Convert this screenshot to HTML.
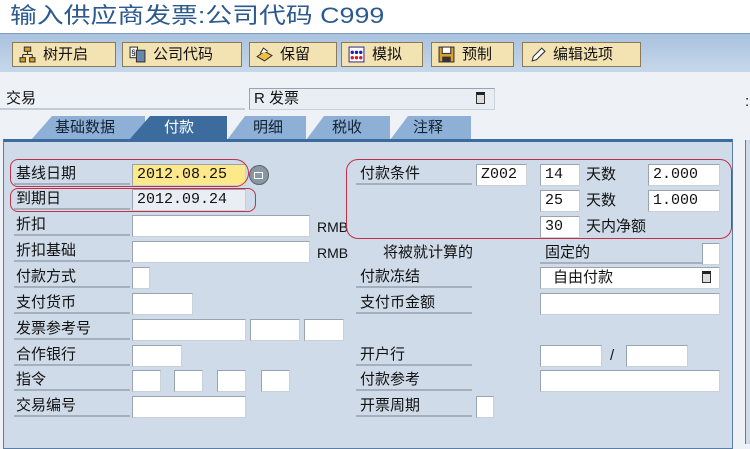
<!DOCTYPE html>
<html><head><meta charset="utf-8"><style>
*{margin:0;padding:0;box-sizing:border-box}
body{width:750px;height:444px;overflow:hidden;background:#eef2f7;font-family:"Liberation Sans","Noto Sans CJK SC",sans-serif;font-size:15px;color:#111;position:relative}
.a{position:absolute}
.t{position:absolute;white-space:nowrap;line-height:20px}
.lb{position:absolute;left:14px;width:116px;height:22px;border-bottom:2px solid #a6b0bc;padding-left:2px;line-height:21px;white-space:nowrap}
.rl{position:absolute;left:356px;width:116px;height:22px;border-bottom:2px solid #a6b0bc;padding-left:4px;line-height:21px;white-space:nowrap}
.in{position:absolute;background:#fff;border:1px solid #9aa4b0;border-right-color:#c8d0d8;border-bottom-color:#c8d0d8;height:22px;font-family:"Liberation Mono",monospace;font-size:15px;line-height:20px;padding-left:4px}
.btn{position:absolute;top:42px;height:25px;background:#f4e3b2;border:1px solid #8a7a5a;line-height:23px;padding-left:30px;font-size:15px;white-space:nowrap}
.ic{position:absolute;left:6px;top:3px;width:17px;height:17px}
.tab{position:absolute;top:116px;height:24px;line-height:24px;font-size:15px;text-align:center;color:#123}
.red{position:absolute;border:1.5px solid #c0304a;border-radius:8px}
</style></head><body>
<div class="a" style="left:0;top:0;width:750px;height:33px;background:#fff"></div>
<div class="t" style="left:10px;top:3px;font-size:22px;line-height:26px;color:#2c5a8e;transform:scaleX(1.22);transform-origin:left">输入供应商发票:公司代码 C999</div>
<div class="a" style="left:0;top:33px;width:750px;height:39px;background:linear-gradient(#a9c2de,#c6d7ea);border-top:1px solid #7d9cc0"></div>
<div class="btn" style="left:12px;width:104px"><svg class="ic" viewBox="0 0 16 16"><rect x="5" y="1" width="6" height="4" fill="#e0a020" stroke="#333"/><rect x="1" y="11" width="5" height="4" fill="#e0a020" stroke="#333"/><rect x="10" y="11" width="5" height="4" fill="#e0a020" stroke="#333"/><path d="M8 5v3M3.5 8h9M3.5 8v3M12.5 8v3" stroke="#333" fill="none"/></svg>树开启</div>
<div class="btn" style="left:122px;width:120px"><svg class="ic" viewBox="0 0 16 16"><rect x="1" y="1" width="7" height="10" fill="#fff" stroke="#333"/><rect x="7" y="4" width="8" height="11" fill="#68a" stroke="#333"/><text x="2" y="9" font-size="8">§</text></svg>公司代码</div>
<div class="btn" style="left:249px;width:88px"><svg class="ic" viewBox="0 0 16 16"><path d="M1 10l7-5 7 4-7 5z" fill="#f0c040" stroke="#333"/><path d="M4 7l3-5 4 3" fill="#fff" stroke="#333"/></svg>保留</div>
<div class="btn" style="left:341px;width:82px"><svg class="ic" viewBox="0 0 16 16"><rect x="1" y="1" width="14" height="14" fill="#fff" stroke="#339"/><circle cx="4" cy="6" r="1.6" fill="#22a"/><circle cx="8" cy="6" r="1.6" fill="#22a"/><circle cx="12" cy="6" r="1.6" fill="#22a"/><circle cx="4" cy="11" r="1.6" fill="#c22"/><circle cx="8" cy="11" r="1.6" fill="#c22"/><circle cx="12" cy="11" r="1.6" fill="#c22"/></svg>模拟</div>
<div class="btn" style="left:431px;width:83px"><svg class="ic" viewBox="0 0 16 16"><rect x="1" y="1" width="14" height="14" fill="#d8a030" stroke="#333"/><rect x="4" y="1" width="8" height="6" fill="#fff" stroke="#333"/><rect x="4" y="10" width="8" height="5" fill="#333"/></svg>预制</div>
<div class="btn" style="left:522px;width:119px"><svg class="ic" viewBox="0 0 16 16"><path d="M3 14l1-4 8-8 3 3-8 8z" fill="#fff" stroke="#333"/></svg>编辑选项</div>
<div class="t" style="left:6px;top:89px">交易</div>
<div class="a" style="left:0;top:108px;width:245px;height:2px;background:#c4ccd6"></div>
<div class="in" style="left:249px;top:88px;width:246px;height:22px;background:#e8eef4;font-family:'Liberation Sans','Noto Sans CJK SC',sans-serif;line-height:20px">R 发票</div>
<div class="a" style="left:476px;top:92px;width:9px;height:12px;border:1px solid #333;background:#ddd;border-top:3px solid #222"></div>
<div class="t" style="left:745px;top:92px">:</div>
<svg class="a" style="left:0;top:0" width="500" height="141"><polygon points="31,140 52,116 145,116 145,140" fill="#8fb0d6"/><polygon points="129,140 150,116 227,116 227,140" fill="#3c6c9e"/><polygon points="227,140 245,116 306,116 306,140" fill="#8fb0d6"/><polygon points="306,140 324,116 390,116 390,140" fill="#8fb0d6"/><polygon points="390,140 408,116 471,116 471,140" fill="#8fb0d6"/></svg>
<div class="tab" style="left:48px;width:74px">基础数据</div>
<div class="tab" style="left:158px;width:42px;color:#fff">付款</div>
<div class="tab" style="left:247px;width:42px">明细</div>
<div class="tab" style="left:326px;width:42px">税收</div>
<div class="tab" style="left:407px;width:42px">注释</div>
<div class="a" style="left:3px;top:139px;width:730px;height:310px;background:#cfdbe8;border:1px solid #5a7ea6;border-top:3px solid #3c6c9e"></div>
<div class="a" style="left:745px;top:140px;width:5px;height:304px;background:#cfdbe8;border-left:1px solid #5a7ea6"></div>

<div class="lb" style="top:163px">基线日期</div>
<div class="in" style="left:132px;top:164px;width:114px;background:#fde98a">2012.08.25</div>
<div class="a" style="left:249px;top:165px;width:20px;height:20px;border-radius:50%;background:#8a96a4;border:1px solid #566"></div>
<div class="a" style="left:254px;top:172px;width:9px;height:7px;border:1.5px solid #fff"></div>
<div class="lb" style="top:188px">到期日</div>
<div class="in" style="left:132px;top:189px;width:114px;background:#e8eef4">2012.09.24</div>
<div class="lb" style="top:214px">折扣</div><div class="in" style="left:132px;top:215px;width:178px"></div><div class="t" style="left:317px;top:217px;font-size:14px">RMB</div>
<div class="lb" style="top:240px">折扣基础</div><div class="in" style="left:132px;top:241px;width:178px"></div><div class="t" style="left:317px;top:243px;font-size:14px">RMB</div>
<div class="lb" style="top:266px">付款方式</div><div class="in" style="left:132px;top:267px;width:18px"></div>
<div class="lb" style="top:292px">支付货币</div><div class="in" style="left:132px;top:293px;width:61px"></div>
<div class="lb" style="top:318px">发票参考号</div><div class="in" style="left:132px;top:319px;width:114px"></div><div class="in" style="left:250px;top:319px;width:50px"></div><div class="in" style="left:304px;top:319px;width:40px"></div>
<div class="lb" style="top:344px">合作银行</div><div class="in" style="left:132px;top:345px;width:50px"></div>
<div class="lb" style="top:369px">指令</div><div class="in" style="left:132px;top:370px;width:29px"></div><div class="in" style="left:174px;top:370px;width:29px"></div><div class="in" style="left:217px;top:370px;width:29px"></div><div class="in" style="left:261px;top:370px;width:29px"></div>
<div class="lb" style="top:395px">交易编号</div><div class="in" style="left:132px;top:396px;width:114px"></div>

<div class="rl" style="top:163px">付款条件</div><div class="in" style="left:476px;top:164px;width:51px">Z002</div>
<div class="in" style="left:540px;top:164px;width:40px">14</div><div class="t" style="left:586px;top:165px">天数</div><div class="in" style="left:648px;top:164px;width:72px">2.000</div>
<div class="in" style="left:540px;top:190px;width:40px">25</div><div class="t" style="left:586px;top:191px">天数</div><div class="in" style="left:648px;top:190px;width:72px">1.000</div>
<div class="in" style="left:540px;top:216px;width:40px">30</div><div class="t" style="left:586px;top:217px">天内净额</div>
<div class="t" style="left:383px;top:243px">将被就计算的</div>
<div class="a" style="left:540px;top:241px;width:162px;height:23px;border-bottom:2px solid #a6b0bc"></div><div class="t" style="left:545px;top:243px">固定的</div><div class="in" style="left:702px;top:243px;width:18px"></div>
<div class="rl" style="top:266px">付款冻结</div>
<div class="in" style="left:540px;top:267px;width:180px;font-family:'Liberation Sans','Noto Sans CJK SC',sans-serif;padding-left:12px">自由付款</div>
<div class="a" style="left:702px;top:271px;width:9px;height:12px;border:1px solid #333;background:#ddd;border-top:3px solid #222"></div>
<div class="rl" style="top:292px">支付币金额</div><div class="in" style="left:540px;top:293px;width:180px"></div>
<div class="rl" style="top:344px">开户行</div><div class="in" style="left:540px;top:345px;width:62px"></div><div class="t" style="left:610px;top:346px">/</div><div class="in" style="left:626px;top:345px;width:62px"></div>
<div class="rl" style="top:369px">付款参考</div><div class="in" style="left:540px;top:370px;width:180px"></div>
<div class="rl" style="top:395px">开票周期</div><div class="in" style="left:476px;top:396px;width:18px"></div>

<div class="red" style="left:10px;top:159px;width:239px;height:28px;border-radius:8px 14px 14px 8px"></div>
<div class="red" style="left:10px;top:188px;width:246px;height:24px"></div>
<div class="red" style="left:346px;top:159px;width:386px;height:80px;border-radius:12px"></div>
</body></html>
